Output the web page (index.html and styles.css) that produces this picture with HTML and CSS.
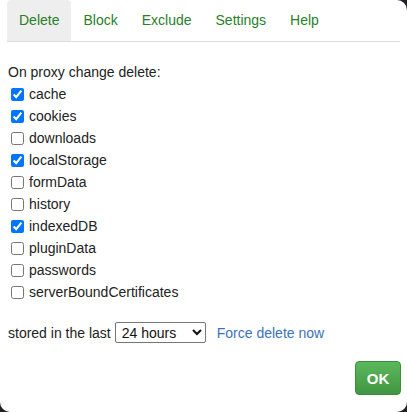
FILE: index.html
```html
<!DOCTYPE html>
<html>
<head>
<meta charset="utf-8">
<link rel="stylesheet" href="styles.css">
</head>
<body>
<div class="popup">
  <ul class="tabs">
    <li class="tab active">Delete</li>
    <li class="tab">Block</li>
    <li class="tab">Exclude</li>
    <li class="tab">Settings</li>
    <li class="tab">Help</li>
  </ul>
  <div class="content">
    <div class="title">On proxy change delete:</div>
    <label class="row"><input type="checkbox" checked>cache</label>
    <label class="row"><input type="checkbox" checked>cookies</label>
    <label class="row"><input type="checkbox">downloads</label>
    <label class="row"><input type="checkbox" checked>localStorage</label>
    <label class="row"><input type="checkbox">formData</label>
    <label class="row"><input type="checkbox">history</label>
    <label class="row"><input type="checkbox" checked>indexedDB</label>
    <label class="row"><input type="checkbox">pluginData</label>
    <label class="row"><input type="checkbox">passwords</label>
    <label class="row"><input type="checkbox">serverBoundCertificates</label>
    <div class="stored">
      <span>stored in the last</span>
      <select class="select">
        <option>24 hours</option>
      </select>
      <a class="link">Force delete now</a>
    </div>
    <div class="footer">
      <button class="ok">OK</button>
    </div>
  </div>
</div>
</body>
</html>
```
FILE: styles.css
```css
html, body {
  margin: 0;
  padding: 0;
  background: #202124;
  width: 407px;
  height: 412px;
  overflow: hidden;
}
.popup {
  width: 407px;
  height: 412px;
  background: #fff;
  border-radius: 0 10px 10px 10px;
  font-family: "Liberation Sans", Arial, sans-serif;
  font-size: 14px;
  color: #222;
  box-sizing: border-box;
}
.tabs {
  list-style: none;
  margin: 0 7px 0 7px;
  padding: 0;
  display: flex;
  border-bottom: 1px solid #dddddd;
  height: 41px;
}
.tab {
  padding: 0 12px;
  height: 41px;
  line-height: 41px;
  color: #2a7f2a;
  font-size: 14px;
  border-radius: 4px 4px 0 0;
}
.tab.active {
  background: #eeeeee;
}
.content {
  padding: 21px 6px 0 8px;
}
.title {
  line-height: 18px;
  margin-bottom: 2px;
}
.row {
  display: flex;
  align-items: center;
  height: 22px;
}
.row input {
  margin: 0 5px 0 3px;
  width: 13px;
  height: 13px;
}
.stored {
  display: flex;
  align-items: center;
  margin-top: 19px;
}
.select {
  margin-left: 4px;
  width: 91px;
  height: 21px;
  font-family: "Liberation Sans", Arial, sans-serif;
  font-size: 14px;
  padding: 0 0 0 2px;
  border: 1px solid #767676;
  border-radius: 2px;
  background: #fff;
  color: #111;
}
.link {
  color: #3b73b9;
  margin-left: 11px;
}
.footer {
  display: flex;
  justify-content: flex-end;
  margin-top: 18px;
}
.ok {
  width: 46px;
  height: 34px;
  border: 1px solid #3d8b3d;
  border-radius: 4px;
  background: linear-gradient(#5cb85c, #419641);
  color: #fff;
  font-family: "Liberation Sans", Arial, sans-serif;
  font-size: 15px;
  font-weight: bold;
  padding: 0;
}
```
